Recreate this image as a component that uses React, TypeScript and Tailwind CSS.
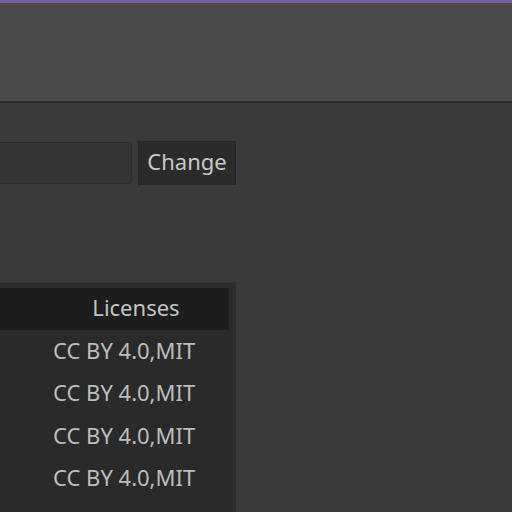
import React from "react";

const rows = ["CC BY 4.0,MIT", "CC BY 4.0,MIT", "CC BY 4.0,MIT", "CC BY 4.0,MIT"];

export default function App() {
  return (
    <div
      className="w-[512px] h-[512px] overflow-hidden bg-[#3a3a3a] flex flex-col text-[#c4c4c4]"
      style={{ fontFamily: '"Noto Sans", "Open Sans", sans-serif' }}
    >
      <div className="h-[3px] bg-[#7a61a4] shrink-0" />
      <div className="h-[98px] bg-[#4b4b4b] shrink-0" />
      <div className="h-[2px] bg-[#2c2c2c] shrink-0" />

      <div className="flex flex-col -ml-[200px] pt-[38px]">
        <div className="flex items-center gap-[6px]">
          <div className="w-[332px] h-[42px] bg-[#353535] border border-[#2e2e2e] rounded-[3px]" />
          <button className="h-[44px] w-[98px] pb-[4px] bg-[#2b2b2b] border border-dotted border-[#222] text-[22px] text-[#c8c8c8] leading-none">
            Change
          </button>
        </div>

        <div className="mt-[97px] w-[436px] h-[300px] bg-[#2a2a2a] border-r-[3px] border-t-[1px] border-[#2f2f2f] pt-[5px]">
          <div className="flex h-[42px] w-[429px] pb-[3px] bg-[#1d1d1d] items-center">
            <div className="w-[243px]" />
            <div className="flex-1 text-center text-[22px]">Licenses</div>
          </div>
          {rows.map((r, i) => (
            <div key={i} className="flex h-[42.5px] pb-[2px] items-center text-[22px]">
              <div className="w-[243px]" />
              <div className="pl-[10px] text-[#bdbdbd]">{r}</div>
            </div>
          ))}
        </div>
      </div>
    </div>
  );
}
